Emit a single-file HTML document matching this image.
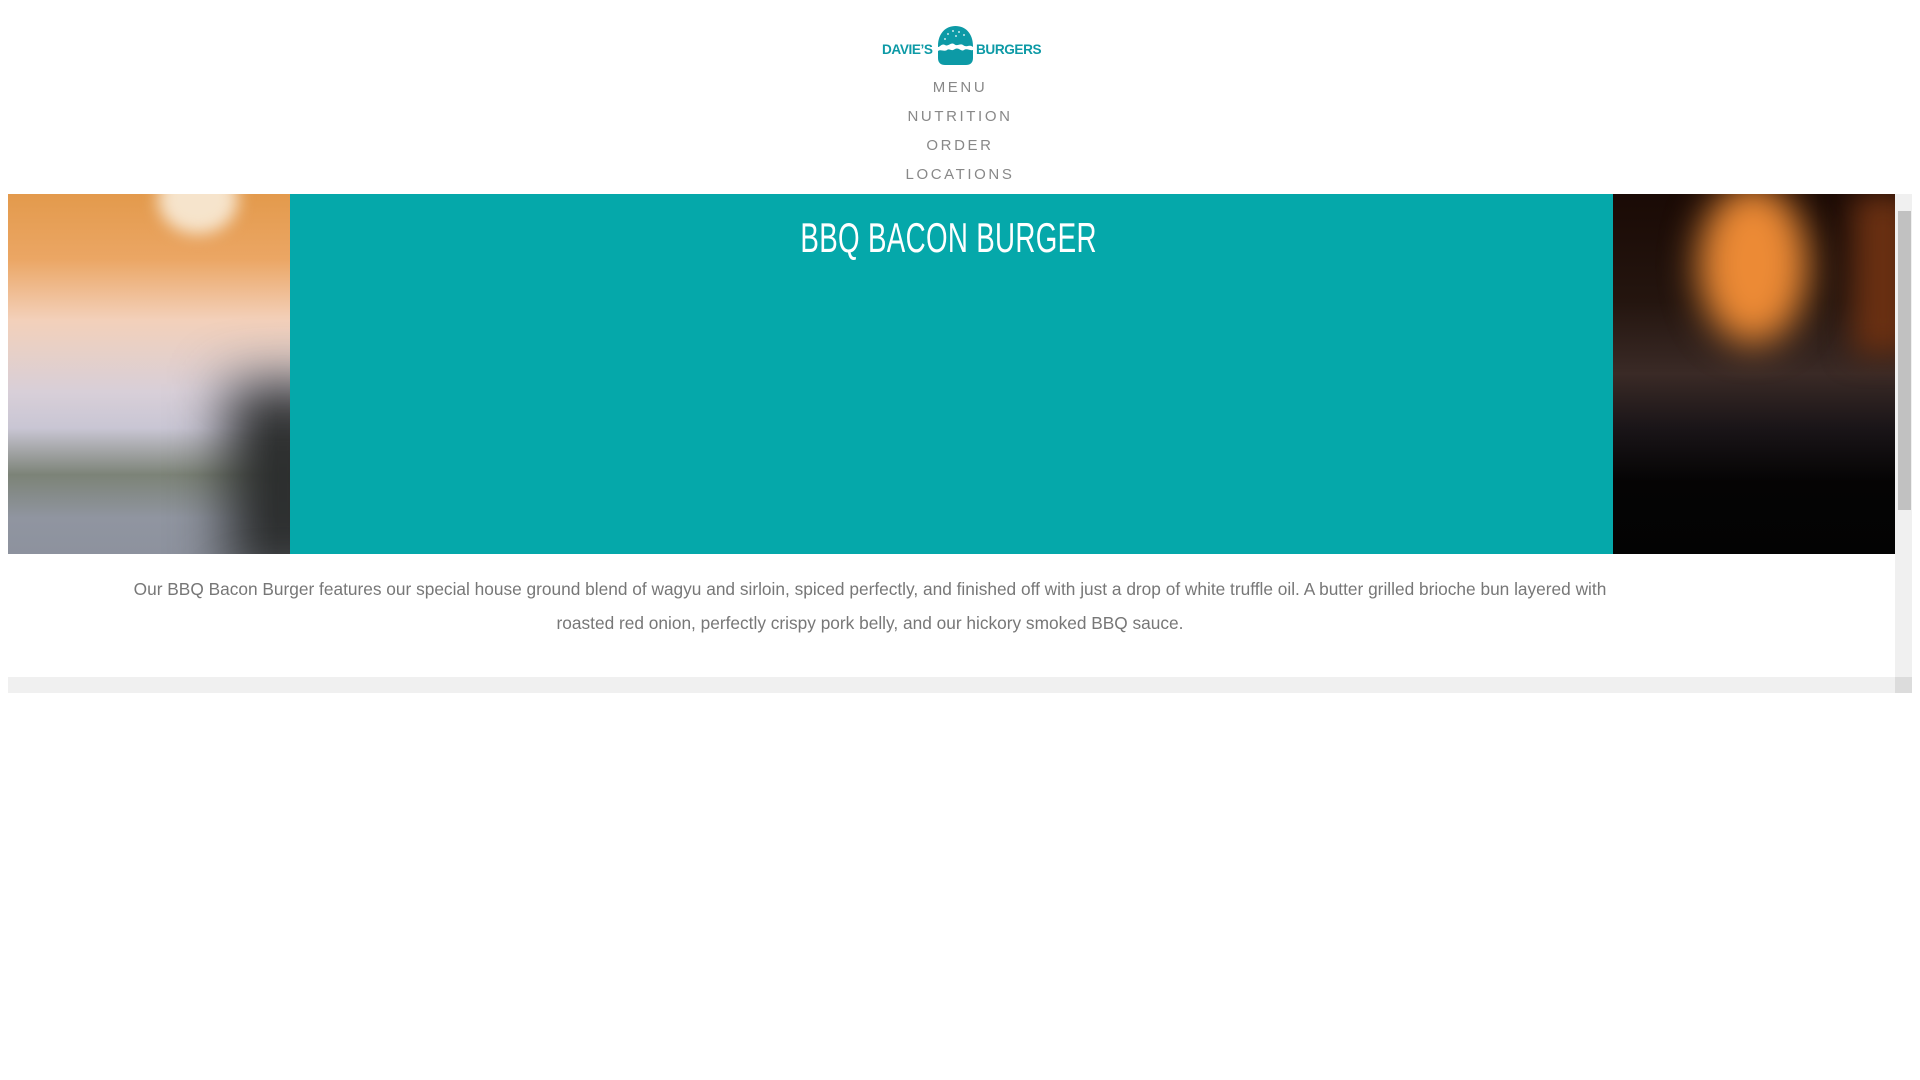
<!DOCTYPE html>
<html><head><meta charset="utf-8"><style>
html,body{margin:0;padding:0;background:#fff;width:1920px;height:1080px;overflow:hidden;position:relative;font-family:"Liberation Sans",sans-serif}
.logo{position:absolute;left:882px;top:24px;height:42px;width:160px}
.lt{position:absolute;top:18px;font-weight:bold;font-size:13.6px;color:#0d9aa6;letter-spacing:-0.4px}
.nav{position:absolute;left:0;width:1920px;text-align:center;font-size:15px;color:#888;letter-spacing:2.6px}
.frame{position:absolute;left:8px;top:194px;width:1904px;height:499px;}
.l{position:absolute;left:0;top:0;width:282px;height:360px;overflow:hidden;
background:linear-gradient(180deg,#e39a4c 0%,#eba664 18%,#f3d0ba 35%,#d8cfd8 55%,#c9c6d4 65%,#7c8377 78%,#9095a0 90%,#8d929e 100%)}
.r{position:absolute;left:1605px;top:0;width:282px;height:360px;overflow:hidden;background:linear-gradient(180deg,#1a0a05 0%,#24150f 30%,#3a2a26 50%,#1a1518 65%,#050404 80%,#030303 100%)}
.t{position:absolute;left:282px;top:0;width:1323px;height:360px;background:#05a8aa}
.title{position:absolute;left:0;width:1323px;top:20px;text-align:center;color:#fff;font-size:42px;transform:scaleX(0.66);transform-origin:653px 0;letter-spacing:0.5px;white-space:nowrap}
.p{position:absolute;left:0;width:1724px;text-align:center;color:#777;font-size:17.3px;line-height:34px;white-space:nowrap}
.vs{position:absolute;left:1887px;top:0;width:17px;height:483px;background:#f0f0f0}
.hs{position:absolute;left:0;top:483px;width:1887px;height:16px;background:#f0f0f0}
</style></head><body>
<div class="logo">
<span class="lt" style="left:0">DAVIE’S</span>
<svg style="position:absolute;left:54px;top:1px" width="39" height="41" viewBox="0 0 39 41">
<path d="M2 21 C2 8 10 1 19.5 1 C29 1 37 8 37 21 L37 22 C33 19 31 23 27 20 C24 18 21 22 18 19 C15 17 12 22 9 20 C6 18 4 22 2 22Z" fill="#0d9aa6"/>
<path d="M2 26 C5 24 8 27 11 25 C14 23 15 27 19 24 C23 22 25 27 28 25 C31 23 34 26 37 25 L37 33 C37 38 34 40 30 40 L9 40 C5 40 2 38 2 33Z" fill="#0d9aa6"/>
<g fill="#fff"><circle cx="12" cy="9" r="0.9"/><circle cx="17" cy="6" r="0.9"/><circle cx="23" cy="7" r="0.9"/><circle cx="28" cy="10" r="0.9"/><circle cx="20" cy="11" r="0.9"/><circle cx="9" cy="14" r="0.9"/></g>
</svg>
<span class="lt" style="left:94px">BURGERS</span>
</div>
<div class="nav" style="top:79px">MENU</div>
<div class="nav" style="top:108px">NUTRITION</div>
<div class="nav" style="top:137px">ORDER</div>
<div class="nav" style="top:166px">LOCATIONS</div>
<div class="frame">
<div class="l">
<div style="position:absolute;left:150px;top:-30px;width:80px;height:70px;border-radius:50%;background:#f6e4cc;filter:blur(8px)"></div>
<div style="position:absolute;left:220px;top:190px;width:110px;height:200px;background:#2a2c2c;filter:blur(28px)"></div>
</div>
<div class="t"><div class="title">BBQ BACON BURGER</div></div>
<div class="r">
<div style="position:absolute;left:85px;top:-10px;width:110px;height:160px;border-radius:50%;background:#ec8a35;filter:blur(18px)"></div>
<div style="position:absolute;left:240px;top:0px;width:60px;height:160px;background:#6a3012;filter:blur(15px)"></div>
</div>
<div class="vs"><div style="position:absolute;left:3px;top:17px;width:13px;height:299px;background:#c1c1c1"></div></div>
<div class="hs"></div>
<div style="position:absolute;left:1887px;top:483px;width:17px;height:16px;background:#dcdcdc"></div>
<div class="p" style="top:378px">Our BBQ Bacon Burger features our special house ground blend of wagyu and sirloin, spiced perfectly, and finished off with just a drop of white truffle oil. A butter grilled brioche bun layered with</div>
<div class="p" style="top:412px">roasted red onion, perfectly crispy pork belly, and our hickory smoked BBQ sauce.</div>
</div>
</body></html>
